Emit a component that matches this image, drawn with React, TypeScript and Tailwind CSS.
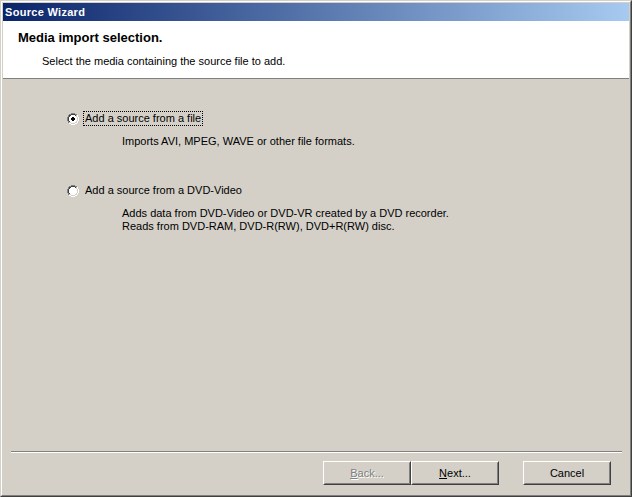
import React from "react";

const OUTER = [
  [0, 4], [0, 5], [0, 6], [0, 7],
  [1, 2], [1, 3], [1, 8], [1, 9],
  [2, 1], [2, 10], [3, 1], [3, 10],
  [4, 0], [4, 11], [5, 0], [5, 11], [6, 0], [6, 11], [7, 0], [7, 11],
  [8, 1], [8, 10], [9, 1], [9, 10],
  [10, 2], [10, 3], [10, 8], [10, 9],
  [11, 4], [11, 5], [11, 6], [11, 7],
];
const INNER = [
  [1, 4], [1, 5], [1, 6], [1, 7],
  [2, 2], [2, 3], [2, 8], [2, 9],
  [3, 2], [3, 9],
  [4, 1], [4, 10], [5, 1], [5, 10], [6, 1], [6, 10], [7, 1], [7, 10],
  [8, 2], [8, 9],
  [9, 2], [9, 3], [9, 8], [9, 9],
  [10, 4], [10, 5], [10, 6], [10, 7],
];
const FILL: [number, number, number][] = [
  [2, 4, 4], [3, 3, 6], [4, 2, 8], [5, 2, 8], [6, 2, 8], [7, 2, 8], [8, 3, 6], [9, 4, 4],
];
const DOT: [number, number, number][] = [
  [4, 5, 2], [5, 4, 4], [6, 4, 4], [7, 5, 2],
];

function Radio({ checked }: { checked: boolean }) {
  return (
    <svg width="12" height="12" viewBox="0 0 12 12" shapeRendering="crispEdges" className="shrink-0">
      {FILL.map(([y, x, w]) => (
        <rect key={`f${y}`} x={x} y={y} width={w} height={1} fill="#ffffff" />
      ))}
      {OUTER.map(([y, x]) => (
        <rect key={`o${y}-${x}`} x={x} y={y} width={1} height={1} fill={x + y <= 10 ? "#808080" : "#ffffff"} />
      ))}
      {INNER.map(([y, x]) => (
        <rect key={`i${y}-${x}`} x={x} y={y} width={1} height={1} fill={x + y <= 10 ? "#404040" : "#d4d0c8"} />
      ))}
      {checked &&
        DOT.map(([y, x, w]) => (
          <rect key={`d${y}`} x={x} y={y} width={w} height={1} fill="#000000" />
        ))}
    </svg>
  );
}

function Button({ children, disabled }: { children: React.ReactNode; disabled?: boolean }) {
  return (
    <div className="w-[88px] h-[24px] border border-t-white border-l-white border-r-[#404040] border-b-[#404040] bg-[#d4d0c8]">
      <div
        className={
          "h-full border border-t-[#d4d0c8] border-l-[#d4d0c8] border-r-[#808080] border-b-[#808080] flex items-center justify-center leading-[13px] " +
          (disabled ? "text-[#808080] [text-shadow:1px_1px_0_#ffffff]" : "text-black")
        }
      >
        {children}
      </div>
    </div>
  );
}

export default function App() {
  return (
    <div className="w-[632px] h-[497px] bg-[#d4d0c8] border border-t-[#d4d0c8] border-l-[#d4d0c8] border-r-[#404040] border-b-[#404040] font-['Liberation_Sans',Arial,sans-serif] text-[11px] text-black">
      <div className="h-full border border-t-white border-l-white border-r-[#808080] border-b-[#808080] p-px flex flex-col">
        <div className="h-[18px] shrink-0 bg-linear-to-r/srgb from-[#0a246a] to-[#a6caf0] flex items-center pl-[2px]">
          <span className="text-white font-bold leading-[18px] tracking-[0.3px]">Source Wizard</span>
        </div>
        <div className="h-[58px] shrink-0 bg-white border-b border-[#808080] flex flex-col">
          <div className="pt-[9px] pl-[15px] text-[13px] leading-[15px] font-bold">Media import selection.</div>
          <div className="mt-[10px] pl-[39px] leading-[13px]">Select the media containing the source file to add.</div>
        </div>
        <div className="flex-1 flex flex-col">
          <div className="mt-[32px] pl-[64px] flex items-center gap-[4px]">
            <Radio checked />
            <span className="border border-dotted border-black px-px leading-[13px]">Add a source from a file</span>
          </div>
          <div className="mt-[9px] pl-[119px] leading-[13px]">Imports AVI, MPEG, WAVE or other file formats.</div>

          <div className="mt-[35px] pl-[64px] flex items-center gap-[4px]">
            <Radio checked={false} />
            <span className="border border-transparent px-px leading-[13px]">Add a source from a DVD-Video</span>
          </div>
          <div className="mt-[9px] pl-[119px] leading-[13px]">
            <div>Adds data from DVD-Video or DVD-VR created by a DVD recorder.</div>
            <div>Reads from DVD-RAM, DVD-R(RW), DVD+R(RW) disc.</div>
          </div>

          <div className="mt-auto">
            <div className="ml-[8px] mr-[7px] border-t border-t-[#808080] border-b border-b-white" />
            <div className="mt-[8px] pb-[9px] pr-[18px] flex justify-end">
              <Button disabled>
                <span><span className="underline">B</span>ack...</span>
              </Button>
              <Button>
                <span><span className="underline">N</span>ext...</span>
              </Button>
              <div className="w-[24px]" />
              <Button>Cancel</Button>
            </div>
          </div>
        </div>
      </div>
    </div>
  );
}
